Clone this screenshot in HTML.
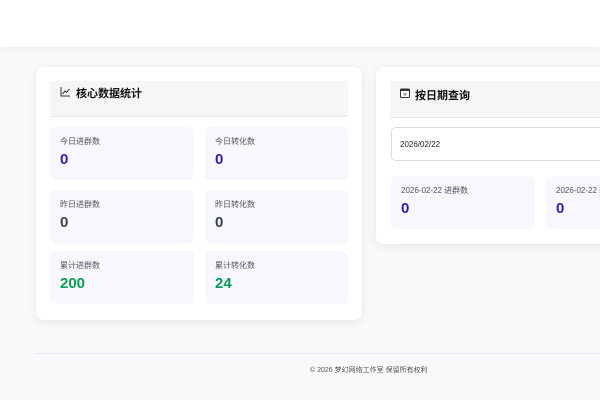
<!DOCTYPE html>
<html><head><meta charset="utf-8"><style>
*{box-sizing:border-box;margin:0;padding:0}
body{width:600px;height:400px;overflow:hidden;background:#f8f9fb;font-family:"Liberation Sans","Noto Sans CJK SC",sans-serif;position:relative}
.hdr{position:absolute;left:0;top:0;width:600px;height:47px;background:#fff;box-shadow:0 2px 6px rgba(0,0,0,.05)}
.card{position:absolute;background:#fff;border-radius:8px;box-shadow:0 2px 10px rgba(0,0,0,.08)}
.ch{position:absolute;background:#f6f6f7;border-bottom:1px solid #e6e7ea;height:36px;font-size:11px;font-weight:bold;color:#111;padding:4px 0 0 10px;display:flex;align-items:flex-start;gap:5px}
.st{position:absolute;background:#f7f7fd;border-radius:5px;width:144px;height:53px;padding:9px 0 0 10px}
.st .l{font-size:8px;color:#555}
.st .v{font-size:15px;font-weight:bold;color:#2a1fb0;margin-top:4px}
.st .v.g{color:#374151}.st .v.gr{color:#0a9d58}
</style></head><body>
<div class="hdr"></div>
<div class="card" style="left:36px;top:67px;width:326px;height:253px">
 <div class="ch" style="left:14px;top:14px;width:298px">
  <svg width="11" height="11" viewBox="0 0 11 11" style="margin-top:1px"><path d="M1 1V10H10" stroke="#333" fill="none" stroke-width="1"/><path d="M2.5 8L5 5L6.5 6.5L9.5 3" stroke="#333" fill="none" stroke-width="1"/></svg>核心数据统计</div>
 <div class="st" style="left:14px;top:60px"><div class="l">今日进群数</div><div class="v">0</div></div>
 <div class="st" style="left:169px;top:60px"><div class="l">今日转化数</div><div class="v">0</div></div>
 <div class="st" style="left:14px;top:123px"><div class="l">昨日进群数</div><div class="v g">0</div></div>
 <div class="st" style="left:169px;top:123px"><div class="l">昨日转化数</div><div class="v g">0</div></div>
 <div class="st" style="left:14px;top:184px"><div class="l">累计进群数</div><div class="v gr">200</div></div>
 <div class="st" style="left:169px;top:184px"><div class="l">累计转化数</div><div class="v gr">24</div></div>
</div>
<div class="card" style="left:376px;top:67px;width:340px;height:177px">
 <div class="ch" style="left:14px;top:14px;width:330px;height:37px;padding-top:6px">
  <svg width="10" height="10" viewBox="0 0 10 10" style="margin-top:1px"><rect x="0.5" y="1" width="9" height="8.5" rx="1" fill="#fff" stroke="#333"/><rect x="0.5" y="1" width="9" height="2" fill="#333"/><rect x="3.5" y="5" width="3" height="2.5" fill="#999"/></svg>按日期查询</div>
 <div style="position:absolute;left:15px;top:60px;width:330px;height:34px;border:1px solid #dcdde0;border-radius:5px;font-size:8px;color:#222;padding:12px 0 0 8px">2026/02/22</div>
 <div class="st" style="left:15px;top:109px"><div class="l">2026-02-22 进群数</div><div class="v">0</div></div>
 <div class="st" style="left:170px;top:109px"><div class="l">2026-02-22 转化数</div><div class="v">0</div></div>
</div>
<div style="position:absolute;left:36px;top:353px;width:564px;border-top:1px solid #e5e7eb"></div>
<div style="position:absolute;left:310px;top:365px;font-size:7px;color:#555;white-space:nowrap">© 2026 梦幻网络工作室 保留所有权利</div>
</body></html>
